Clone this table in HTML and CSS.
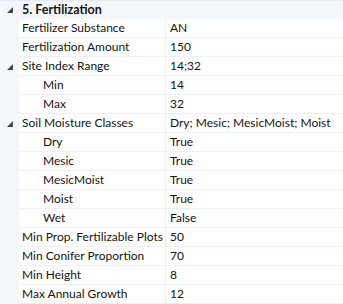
FILE: index.html
```html
<!DOCTYPE html>
<html>
<head>
<meta charset="utf-8">
<link rel="stylesheet" href="styles.css">
</head>
<body>
<div class="grid">
  <div class="cat">
    <div class="gutter"><svg class="tog" width="6" height="6" viewBox="0 0 6 6"><polygon points="0,6 6,0 6,6" fill="#444"/></svg></div>
    <div class="cat-title">5. Fertilization</div>
  </div>
  <div class="row"><div class="gutter"></div><div class="name">Fertilizer Substance</div><div class="val">AN</div></div>
  <div class="row"><div class="gutter"></div><div class="name">Fertilization Amount</div><div class="val">150</div></div>
  <div class="row"><div class="gutter"><svg class="tog" width="6" height="6" viewBox="0 0 6 6"><polygon points="0,6 6,0 6,6" fill="#444"/></svg></div><div class="name">Site Index Range</div><div class="val">14;32</div></div>
  <div class="row"><div class="gutter"></div><div class="name sub">Min</div><div class="val">14</div></div>
  <div class="row"><div class="gutter"></div><div class="name sub">Max</div><div class="val">32</div></div>
  <div class="row"><div class="gutter"><svg class="tog" width="6" height="6" viewBox="0 0 6 6"><polygon points="0,6 6,0 6,6" fill="#444"/></svg></div><div class="name">Soil Moisture Classes</div><div class="val">Dry; Mesic; MesicMoist; Moist</div></div>
  <div class="row"><div class="gutter"></div><div class="name sub">Dry</div><div class="val">True</div></div>
  <div class="row"><div class="gutter"></div><div class="name sub">Mesic</div><div class="val">True</div></div>
  <div class="row"><div class="gutter"></div><div class="name sub">MesicMoist</div><div class="val">True</div></div>
  <div class="row"><div class="gutter"></div><div class="name sub">Moist</div><div class="val">True</div></div>
  <div class="row"><div class="gutter"></div><div class="name sub">Wet</div><div class="val">False</div></div>
  <div class="row"><div class="gutter"></div><div class="name">Min Prop. Fertilizable Plots</div><div class="val">50</div></div>
  <div class="row"><div class="gutter"></div><div class="name">Min Conifer Proportion</div><div class="val">70</div></div>
  <div class="row"><div class="gutter"></div><div class="name">Min Height</div><div class="val">8</div></div>
  <div class="row"><div class="gutter"></div><div class="name">Max Annual Growth</div><div class="val">12</div></div>
</div>
</body>
</html>
```
FILE: styles.css
```css
html, body {
  margin: 0;
  padding: 0;
  background: #ffffff;
}
body {
  font-family: Lato, "Open Sans", sans-serif;
  font-size: 12px;
  color: #141414;
}
.grid {
  display: flex;
  flex-direction: column;
  width: 343px;
}
.cat {
  display: flex;
  height: 19px;
  background: #f3f6fb;
  border-top: 1px solid #e6eaf0;
  box-sizing: border-box;
  align-items: center;
}
.cat-title {
  padding-left: 3px;
  font-weight: bold;
  font-size: 12.5px;
  line-height: 18px;
}
.row {
  display: flex;
  height: 19px;
}
.gutter {
  width: 19px;
  flex: none;
  background: #f3f6fb;
  display: flex;
  align-items: center;
  justify-content: flex-start;
  padding-left: 7px;
  box-sizing: border-box;
  align-self: stretch;
}
.tog {
  display: block;
}
.name {
  width: 147px;
  flex: none;
  box-sizing: border-box;
  padding-left: 3px;
  border-right: 1px solid #edf0f6;
  border-bottom: 1px solid #edf0f6;
  line-height: 18px;
  white-space: nowrap;
  overflow: hidden;
}
.name.sub {
  padding-left: 24px;
}
.val {
  flex: 1;
  box-sizing: border-box;
  padding-left: 4px;
  border-bottom: 1px solid #edf0f6;
  line-height: 18px;
  white-space: nowrap;
  overflow: hidden;
}
```
